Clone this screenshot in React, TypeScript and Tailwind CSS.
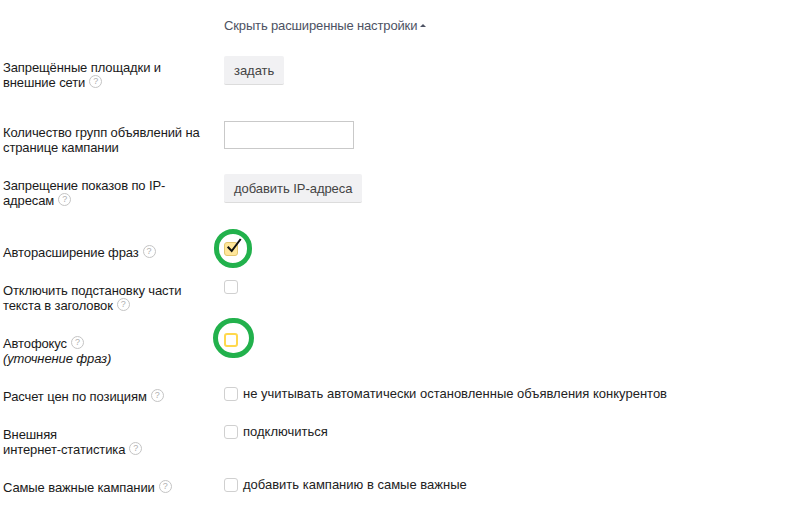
import type { ReactNode } from 'react';

function Hint() {
  return (
    <span className="ml-[4px] inline-flex h-[13px] w-[13px] items-center justify-center rounded-full border border-[#c4c4c4] align-top text-[9px] leading-none tracking-normal text-[#b0b0b0]">
      ?
    </span>
  );
}

function CheckBox({ tone = 'plain' }: { tone?: 'plain' | 'checked' | 'focus' }) {
  const look = {
    plain: 'border border-[#d0d0d0] bg-white',
    checked: 'border border-[#e3c66f] bg-[#ffe69a]',
    focus: 'border-2 border-[#ffd84d] bg-white',
  }[tone];
  return <span className={`block h-[14px] w-[14px] shrink-0 rounded-[3px] ${look}`} />;
}

function Ring({ className }: { className: string }) {
  return <span className={`absolute rounded-full border-[5px] border-[#22b14c] ${className}`} />;
}

function Row({ label, height, pad, children }: { label: ReactNode; height: string; pad: string; children: ReactNode }) {
  return (
    <div className={`flex items-start ${height}`}>
      <div className={`w-[224px] shrink-0 pl-[3px] pr-[20px] tracking-[-0.11px] text-[#1a1a1a] ${pad}`}>{label}</div>
      {children}
    </div>
  );
}

function Option({ tone, text }: { tone?: 'plain' | 'checked' | 'focus'; text?: string }) {
  return (
    <div className="flex items-center gap-[5px]">
      <CheckBox tone={tone} />
      {text && <span className="text-[#222]">{text}</span>}
    </div>
  );
}

function GrayButton({ children }: { children: ReactNode }) {
  return (
    <button className="h-[29px] rounded-[2px] border-b border-[#dcdcdc] bg-[#f1f1f3] px-[10px] text-[13px] tracking-[-0.05px] text-[#444]">
      {children}
    </button>
  );
}

export default function App() {
  return (
    <div className="relative min-h-[505px] w-[809px] overflow-hidden bg-white font-['Liberation_Sans',Arial,sans-serif] text-[13px] leading-[15px] text-[#222]">
      {/* header link */}
      <div className="h-[56px] pl-[224px] pt-[18px] tracking-[-0.14px] text-[#4d5263]">
        Скрыть расширенные настройки
        <span className="ml-[3px] inline-block h-0 w-0 border-x-[3px] border-b-[3px] border-x-transparent border-b-[#4d5263] align-[3px]" />
      </div>

      <Row height="h-[65px]" pad="pt-[4px]" label={<>Запрещённые площадки и<br />внешние сети<Hint /></>}>
        <GrayButton>задать</GrayButton>
      </Row>
      <Row height="h-[53px]" pad="pt-[4px]" label={<>Количество групп объявлений на странице кампании</>}>
        <input className="h-[28px] w-[130px] border border-[#c9c9c9] bg-white" />
      </Row>
      <Row height="h-[68px]" pad="pt-[4px]" label={<>Запрещение показов по IP-<br />адресам<Hint /></>}>
        <GrayButton>добавить IP-адреса</GrayButton>
      </Row>
      <Row height="h-[38px]" pad="pt-[3px]" label={<>Авторасширение фраз<Hint /></>}>
        <Option tone="checked" />
      </Row>
      <Row height="h-[53px]" pad="pt-[3px]" label={<>Отключить подстановку части<br />текста в заголовок<Hint /></>}>
        <Option />
      </Row>
      <Row height="h-[53px]" pad="pt-[3px]" label={<>Автофокус<Hint /><br /><i>(уточнение фраз)</i></>}>
        <Option tone="focus" />
      </Row>
      <Row height="h-[38px]" pad="pt-[3px]" label={<>Расчет цен по позициям<Hint /></>}>
        <Option text="не учитывать автоматически остановленные объявления конкурентов" />
      </Row>
      <Row height="h-[53px]" pad="pt-[3px]" label={<>Внешняя<br />интернет-статистика<Hint /></>}>
        <Option text="подключиться" />
      </Row>
      <Row height="h-[28px]" pad="pt-[3px]" label={<>Самые важные кампании<Hint /></>}>
        <Option text="добавить кампанию в самые важные" />
      </Row>

      {/* hand-drawn marks over the screenshot */}
      <Ring className="left-[214px] top-[229px] h-[39px] w-[38px]" />
      <Ring className="left-[213px] top-[318px] h-[40px] w-[41px]" />
      <svg className="absolute left-[224px] top-[236px] h-[18px] w-[20px]" viewBox="0 0 20 18" fill="none">
        <path d="M3.7 10.7 L7.7 15 L16.7 3" stroke="#111" strokeWidth="2" />
      </svg>
    </div>
  );
}
